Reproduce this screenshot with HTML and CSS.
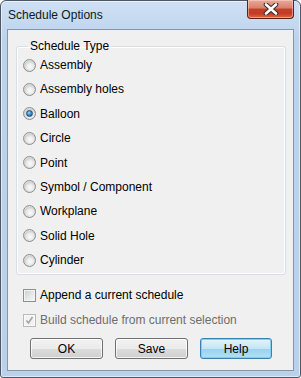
FILE: index.html
```html
<!DOCTYPE HTML>
<html>

<head>
  <meta charset="utf-8">
  <link rel="stylesheet" href="styles.css">
</head>

<body>

  <div class="window">
    <div class="titlebar">
      <span class="title">Schedule Options</span>
      <div class="close">
        <svg width="16" height="12" viewBox="0 0 16 12">
          <path d="M3 1.5 L13 10.5 M13 1.5 L3 10.5" stroke="#3c2a2a" stroke-width="4.6" stroke-linecap="round"/>
          <path d="M3 1.5 L13 10.5 M13 1.5 L3 10.5" stroke="#fff" stroke-width="2.6" stroke-linecap="round"/>
        </svg>
      </div>
    </div>

    <div class="client">
      <fieldset class="group">
        <legend>Schedule Type</legend>
        <label class="option"><span class="radio"></span>Assembly</label>
        <label class="option"><span class="radio"></span>Assembly holes</label>
        <label class="option"><span class="radio on"></span>Balloon</label>
        <label class="option"><span class="radio"></span>Circle</label>
        <label class="option"><span class="radio"></span>Point</label>
        <label class="option"><span class="radio"></span>Symbol / Component</label>
        <label class="option"><span class="radio"></span>Workplane</label>
        <label class="option"><span class="radio"></span>Solid Hole</label>
        <label class="option"><span class="radio"></span>Cylinder</label>
      </fieldset>

      <label class="check"><span class="box"></span>Append a current schedule</label>
      <label class="check disabled">
        <span class="box">
          <svg width="9" height="9" viewBox="0 0 9 9">
            <path d="M1.5 4.5 L3.5 7 L7.5 1" fill="none" stroke="#a4a4a4" stroke-width="1.6"/>
          </svg>
        </span>Build schedule from current selection</label>

      <div class="buttons">
        <button class="btn" type="button">OK</button>
        <button class="btn" type="button">Save</button>
        <button class="btn default" type="button">Help</button>
      </div>
    </div>
  </div>

</body>

</html>
```

FILE: styles.css
```css
/* dialog window, Windows 7 look */

body {
  margin: 0;
  background: #fff;
  font-family: "Liberation Sans", Arial, sans-serif;
  font-size: 12px;
  color: #000;
}

.window {
  width: 301px;
  height: 378px;
  box-sizing: border-box;
  border: 1px solid #4a5868;
  border-radius: 6px 6px 3px 3px;
  background: linear-gradient(to bottom, #cfe0f3 0, #bcd3ec 40px, #b9d1ea 100%);
  box-shadow: inset 0 0 0 1px rgba(255, 255, 255, 0.55);
  display: flex;
  flex-direction: column;
}

.titlebar {
  height: 28px;
  display: flex;
  justify-content: space-between;
  align-items: flex-start;
  padding: 0 6px 0 7px;
  flex-shrink: 0;
}

.title {
  padding-top: 7px;
  line-height: 15px;
  color: #101820;
}

.close {
  width: 45px;
  height: 18px;
  margin-top: -1px;
  border: 1px solid #5b2118;
  border-top: none;
  border-radius: 0 0 4px 4px;
  background: linear-gradient(to bottom, #e9a99b 0, #d7806c 45%, #c1412a 50%, #c63b22 75%, #e0664b 100%);
  box-shadow: inset 0 0 0 1px rgba(255, 220, 210, 0.5);
  display: flex;
  align-items: center;
  justify-content: center;
}

.client {
  flex: 1;
  margin: 0 6px 6px 6px;
  border: 1px solid #8396ab;
  background: #f0f0f0;
  padding: 0 7px 0 8px;
  display: flex;
  flex-direction: column;
}

.group {
  margin: 8px 0 0 0;
  padding: 3px 6px 6px 6px;
  border: 1px solid #d5dfe5;
  border-radius: 3px;
  box-shadow: inset 0 0 0 1px #fff;
  display: flex;
  flex-direction: column;
  gap: 8.4px;
}

.group legend {
  padding: 0 2px;
  margin-left: 5px;
  line-height: 16px;
}

.option,
.check {
  display: flex;
  align-items: center;
  height: 16px;
  line-height: 16px;
}

.radio {
  width: 13px;
  height: 13px;
  box-sizing: border-box;
  border-radius: 50%;
  border: 1px solid #8c8e8f;
  background: radial-gradient(circle at 55% 60%, #fbfbfb 0, #ececec 35%, #cfd0d1 62%, #f4f4f4 80%);
  margin-right: 4px;
  flex-shrink: 0;
  display: flex;
  align-items: center;
  justify-content: center;
}

.radio.on::after {
  content: "";
  width: 5px;
  height: 5px;
  border-radius: 50%;
  border: 1px solid #1b4f80;
  background: radial-gradient(circle at 40% 35%, #9edcfb 0, #3b8fcf 45%, #17508c 100%);
}

.check {
  margin-left: 7px;
}

.check:first-of-type {
  margin-top: 12px;
}

.check + .check {
  margin-top: 9px;
}

.box {
  width: 13px;
  height: 13px;
  box-sizing: border-box;
  border: 1px solid #8e8f8f;
  background: linear-gradient(135deg, #c9cbcd 0, #e6e7e8 55%, #f7f7f7 100%);
  box-shadow: inset 0 0 0 1px #f4f4f4;
  margin-right: 4px;
  flex-shrink: 0;
  display: flex;
  align-items: center;
  justify-content: center;
}

.disabled {
  color: #6d6d6d;
}

.disabled .box {
  border-color: #b9b9b9;
  background: #f2f2f2;
  box-shadow: inset 0 0 0 1px #fafafa;
}

.buttons {
  display: flex;
  gap: 12px;
  margin-top: 10px;
  padding-left: 14px;
}

.btn {
  width: 73px;
  height: 21px;
  box-sizing: border-box;
  padding: 0;
  font-family: inherit;
  font-size: 12px;
  color: #000;
  border: 1px solid #707070;
  border-radius: 3px;
  background: linear-gradient(to bottom, #f2f2f2 0, #ebebeb 50%, #dddddd 50%, #cfcfcf 100%);
  box-shadow: inset 0 0 0 1px rgba(255, 255, 255, 0.75);
}

.btn.default {
  width: 72px;
  border-color: #3c7fb1;
  background: linear-gradient(to bottom, #e5f4fc 0, #c4e5f6 50%, #98d1ef 50%, #b4e0f5 100%);
  box-shadow: inset 0 0 0 1px #7ad0f5;
}
```
